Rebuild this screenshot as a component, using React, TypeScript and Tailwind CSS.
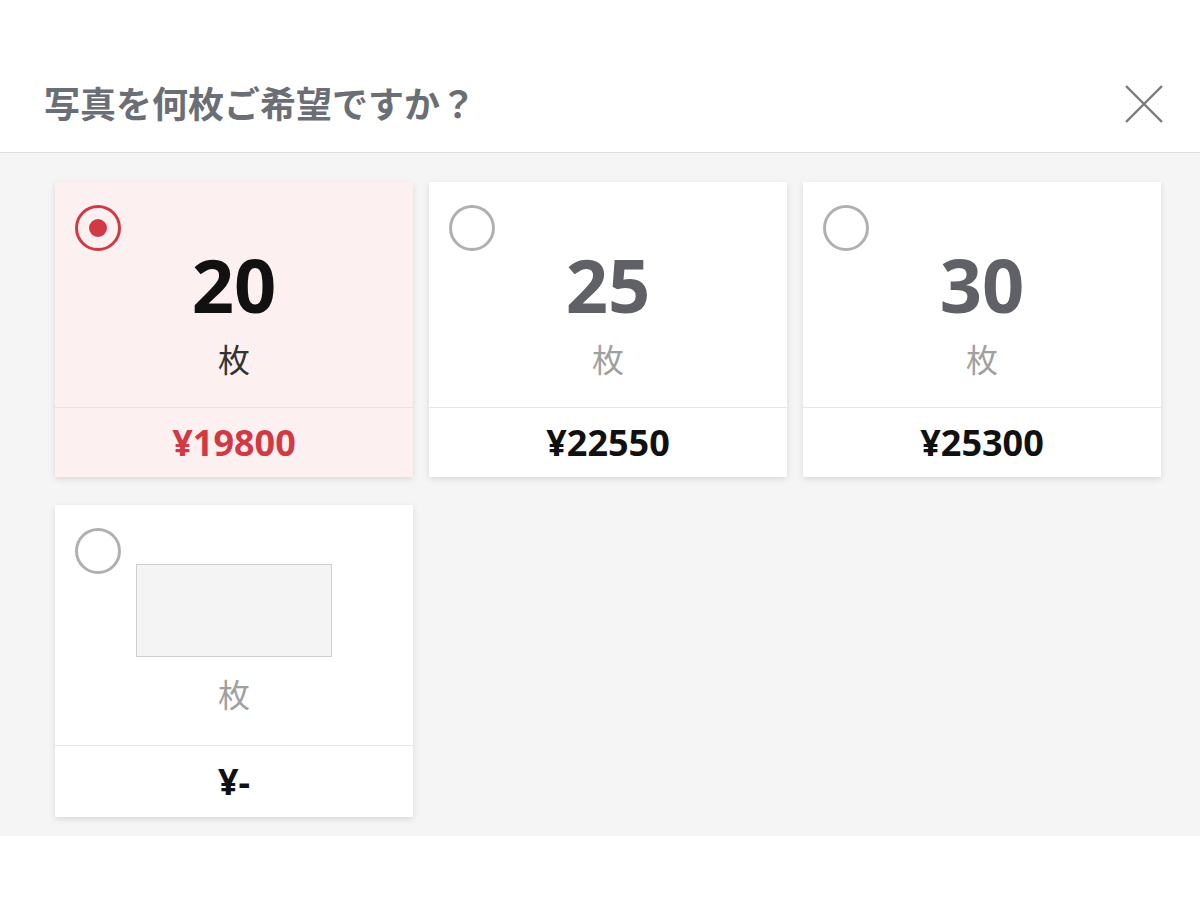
import { useState } from "react";

type Option = { count: number | null; price: string };

const options: Option[] = [
  { count: 20, price: "¥19800" },
  { count: 25, price: "¥22550" },
  { count: 30, price: "¥25300" },
  { count: null, price: "¥-" },
];

const Radio = ({ checked }: { checked: boolean }) => (
  <span
    className={`absolute left-5 top-[23px] flex h-[46px] w-[46px] items-center justify-center rounded-full border-[3px] ${
      checked ? "border-[#d13a45]" : "border-[#b0b0b0]"
    }`}
  >
    {checked && <span className="h-[18px] w-[18px] rounded-full bg-[#d13a45]" />}
  </span>
);

const OptionCard = ({
  option,
  selected,
  onSelect,
}: {
  option: Option;
  selected: boolean;
  onSelect: () => void;
}) => {
  const custom = option.count === null;
  return (
    <button
      onClick={onSelect}
      className={`relative flex w-[358px] flex-col text-left shadow-[0_2px_6px_rgba(0,0,0,0.12)] ${
        selected ? "bg-[#fcf0f1]" : "bg-white"
      }`}
    >
      <Radio checked={selected} />
      {!custom ? (
        <div className="flex h-[225px] flex-col items-center pt-[67px]">
          <span
            className={`text-[74px] font-bold leading-[72px] ${
              selected ? "text-[#111]" : "text-[#5f6166]"
            }`}
          >
            {option.count}
          </span>
          <span
            className={`mt-[19px] text-[32px] leading-[40px] ${
              selected ? "text-[#333]" : "text-[#a0a0a0]"
            }`}
          >
            枚
          </span>
        </div>
      ) : (
        <div className="flex h-[240px] flex-col items-center pt-[59px]">
          <div className="h-[93px] w-[196px] border border-[#cfcfcf] bg-[#f4f4f4]" />
          <span className="mt-[18px] text-[32px] leading-[40px] text-[#a0a0a0]">枚</span>
        </div>
      )}
      <div
        className={`flex items-center justify-center border-t text-[36px] font-bold ${
          custom ? "h-[72px]" : "h-[70px]"
        } ${selected ? "border-[#ecdfe0] text-[#d13a45]" : "border-[#e6e6e6] text-[#111]"}`}
      >
        {option.price}
      </div>
    </button>
  );
};

export default function App() {
  const [selected, setSelected] = useState(0);

  return (
    <div
      className="flex min-h-[900px] w-[1200px] flex-col bg-white"
      style={{ fontFamily: '"Noto Sans", "Noto Sans CJK JP", sans-serif' }}
    >
      <header className="flex h-[153px] items-end justify-between border-b border-[#dedede] pb-[22px] pl-[44px] pr-[36px]">
        <h1 className="text-[36px] font-bold leading-[50px] text-[#6b6f75]">
          写真を何枚ご希望ですか？
        </h1>
        <button className="mb-[6px] text-[#7a7a7a]" aria-label="閉じる">
          <svg width="40" height="40" viewBox="0 0 40 40" fill="none" stroke="currentColor" strokeWidth="2.4">
            <path d="M2 2L38 38M38 2L2 38" />
          </svg>
        </button>
      </header>
      <main className="bg-[#f5f5f5] pb-[19px] pl-[55px] pt-[29px]">
        <div className="grid grid-cols-[358px_358px_358px] gap-x-4 gap-y-[28px]">
          {options.map((o, i) => (
            <OptionCard key={i} option={o} selected={selected === i} onSelect={() => setSelected(i)} />
          ))}
        </div>
      </main>
    </div>
  );
}
